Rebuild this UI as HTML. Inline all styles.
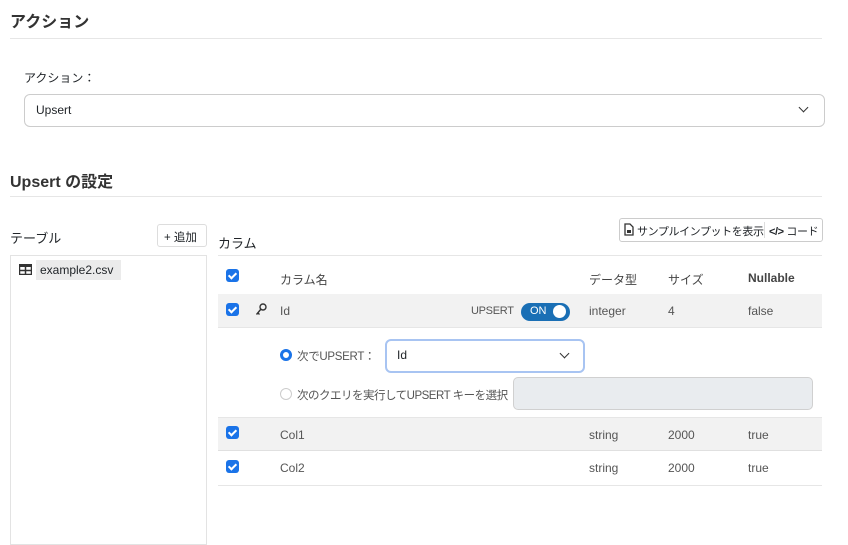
<!DOCTYPE html>
<html><head><meta charset="utf-8"><style>
*{box-sizing:border-box;margin:0;padding:0}
body{width:848px;height:537px;overflow:hidden;background:#fff;position:relative;font-family:"Liberation Sans","Noto Sans CJK JP",sans-serif;color:#212529;font-size:12px}
.a{position:absolute;white-space:nowrap}
.h{font-size:16px;font-weight:bold;color:#333}
.ln{position:absolute;height:1px;background:#e6e6e6}
.cb{position:absolute;width:13px;height:13px;background:#1a73e8;border-radius:3px}
.cb:after{content:"";position:absolute;left:4px;top:2px;width:3px;height:6px;border:solid #fff;border-width:0 2px 2px 0;transform:rotate(45deg)}
.chev{position:absolute;width:7px;height:7px;border:solid #333;border-width:0 1.6px 1.6px 0;transform:rotate(45deg)}
.g{color:#555}
</style></head><body>
<div class="a h" style="left:10px;top:8px">アクション</div>
<div class="ln" style="left:10px;top:38px;width:812px"></div>
<div class="a" style="left:24px;top:69px">アクション：</div>
<div class="a" style="left:24px;top:94px;width:801px;height:33px;border:1px solid #ccc;border-radius:6px"></div>
<div class="a" style="left:36px;top:103px">Upsert</div>
<div class="chev" style="left:800px;top:104px"></div>
<div class="a h" style="left:10px;top:168px">Upsert の設定</div>
<div class="ln" style="left:10px;top:196px;width:812px"></div>
<div class="a" style="left:10px;top:228px;font-size:13px">テーブル</div>
<div class="a" style="left:157px;top:224px;width:50px;height:23px;border:1px solid #ddd;border-radius:3px;padding:4px 0 0 6px;font-size:11.5px">+ 追加</div>
<div class="a" style="left:10px;top:255px;width:197px;height:290px;border:1px solid #e3e3e3"></div>
<svg class="a" style="left:19px;top:264px" width="13" height="11"><rect x="0.5" y="0.5" width="12" height="10" fill="none" stroke="#333" stroke-width="1.5"/><rect x="0" y="0" width="13" height="3" fill="#333"/><line x1="6.5" y1="0" x2="6.5" y2="11" stroke="#333" stroke-width="1.5"/><line x1="0" y1="6.5" x2="13" y2="6.5" stroke="#333" stroke-width="1.5"/></svg>
<div class="a" style="left:36px;top:260px;width:85px;height:20px;background:#ebebeb;padding:3px 0 0 4px">example2.csv</div>
<div class="a" style="left:218px;top:233px;font-size:13px">カラム</div>
<div class="a" style="left:619px;top:218px;width:204px;height:24px;border:1px solid #ccc;border-radius:3px"></div>
<div class="a" style="left:764px;top:222px;width:1px;height:16px;background:#ddd"></div>
<svg class="a" style="left:624px;top:223px" width="10" height="13"><path d="M1 1h5l3 3v8H1z" fill="none" stroke="#333" stroke-width="1.3"/><rect x="3" y="7" width="4" height="3" fill="#333"/></svg>
<div class="a" style="left:637px;top:223px;font-size:11px;letter-spacing:-0.4px">サンプルインプットを表示</div>
<div class="a" style="left:769px;top:223px;font-size:11px;letter-spacing:-0.4px"><b>&lt;/&gt;</b> コード</div>
<div class="ln" style="left:218px;top:255px;width:604px"></div>
<div class="cb" style="left:226px;top:269px"></div>
<div class="a" style="left:280px;top:271px;color:#444">カラム名</div>
<div class="a" style="left:589px;top:271px;color:#444">データ型</div>
<div class="a" style="left:668px;top:271px;color:#444">サイズ</div>
<div class="a" style="left:748px;top:271px;font-weight:bold;color:#444">Nullable</div>
<div class="a" style="left:218px;top:294px;width:604px;height:34px;background:#f2f2f2;border-bottom:1px solid #e6e6e6"></div>
<div class="cb" style="left:226px;top:303px"></div>
<svg class="a" style="left:255px;top:303px" width="12" height="13"><circle cx="8" cy="4" r="3" fill="none" stroke="#333" stroke-width="1.4"/><path d="M6 6L1.5 11.5M3 10l1.5 1.5" stroke="#333" stroke-width="1.4" fill="none"/></svg>
<div class="a g" style="left:280px;top:304px">Id</div>
<div class="a g" style="left:471px;top:305px;font-size:11px;letter-spacing:-0.3px">UPSERT</div>
<div class="a" style="left:521px;top:303px;width:49px;height:18px;border-radius:9px;background:#1a6fb5"></div>
<div class="a" style="left:530px;top:305px;color:#fff;font-size:11px">ON</div>
<div class="a" style="left:553px;top:305px;width:13px;height:13px;border-radius:50%;background:#fff"></div>
<div class="a g" style="left:589px;top:304px">integer</div>
<div class="a g" style="left:668px;top:304px">4</div>
<div class="a g" style="left:748px;top:304px">false</div>
<div class="a" style="left:280px;top:349px;width:12px;height:12px;border-radius:50%;border:3.5px solid #1a73e8"></div>
<div class="a g" style="left:297px;top:348px;font-size:11.5px;letter-spacing:-0.3px">次でUPSERT：</div>
<div class="a" style="left:385px;top:339px;width:200px;height:34px;border:2px solid #a8c4f2;border-radius:6px"></div>
<div class="a" style="left:397px;top:348px">Id</div>
<div class="chev" style="left:561px;top:350px"></div>
<div class="a" style="left:280px;top:388px;width:12px;height:12px;border-radius:50%;border:1px solid #ccc"></div>
<div class="a g" style="left:297px;top:387px;font-size:11.5px;letter-spacing:-0.5px">次のクエリを実行してUPSERT キーを選択</div>
<div class="a" style="left:513px;top:377px;width:300px;height:33px;border:1px solid #d0d0d0;border-radius:5px;background:#e9ecef"></div>
<div class="ln" style="left:218px;top:417px;width:604px"></div>
<div class="a" style="left:218px;top:418px;width:604px;height:33px;background:#f2f2f2;border-bottom:1px solid #e0e0e0"></div>
<div class="cb" style="left:226px;top:426px"></div>
<div class="a g" style="left:280px;top:428px">Col1</div>
<div class="a g" style="left:589px;top:428px">string</div>
<div class="a g" style="left:668px;top:428px">2000</div>
<div class="a g" style="left:748px;top:428px">true</div>
<div class="cb" style="left:226px;top:460px"></div>
<div class="a g" style="left:280px;top:461px">Col2</div>
<div class="a g" style="left:589px;top:461px">string</div>
<div class="a g" style="left:668px;top:461px">2000</div>
<div class="a g" style="left:748px;top:461px">true</div>
<div class="ln" style="left:218px;top:485px;width:604px"></div>
</body></html>
